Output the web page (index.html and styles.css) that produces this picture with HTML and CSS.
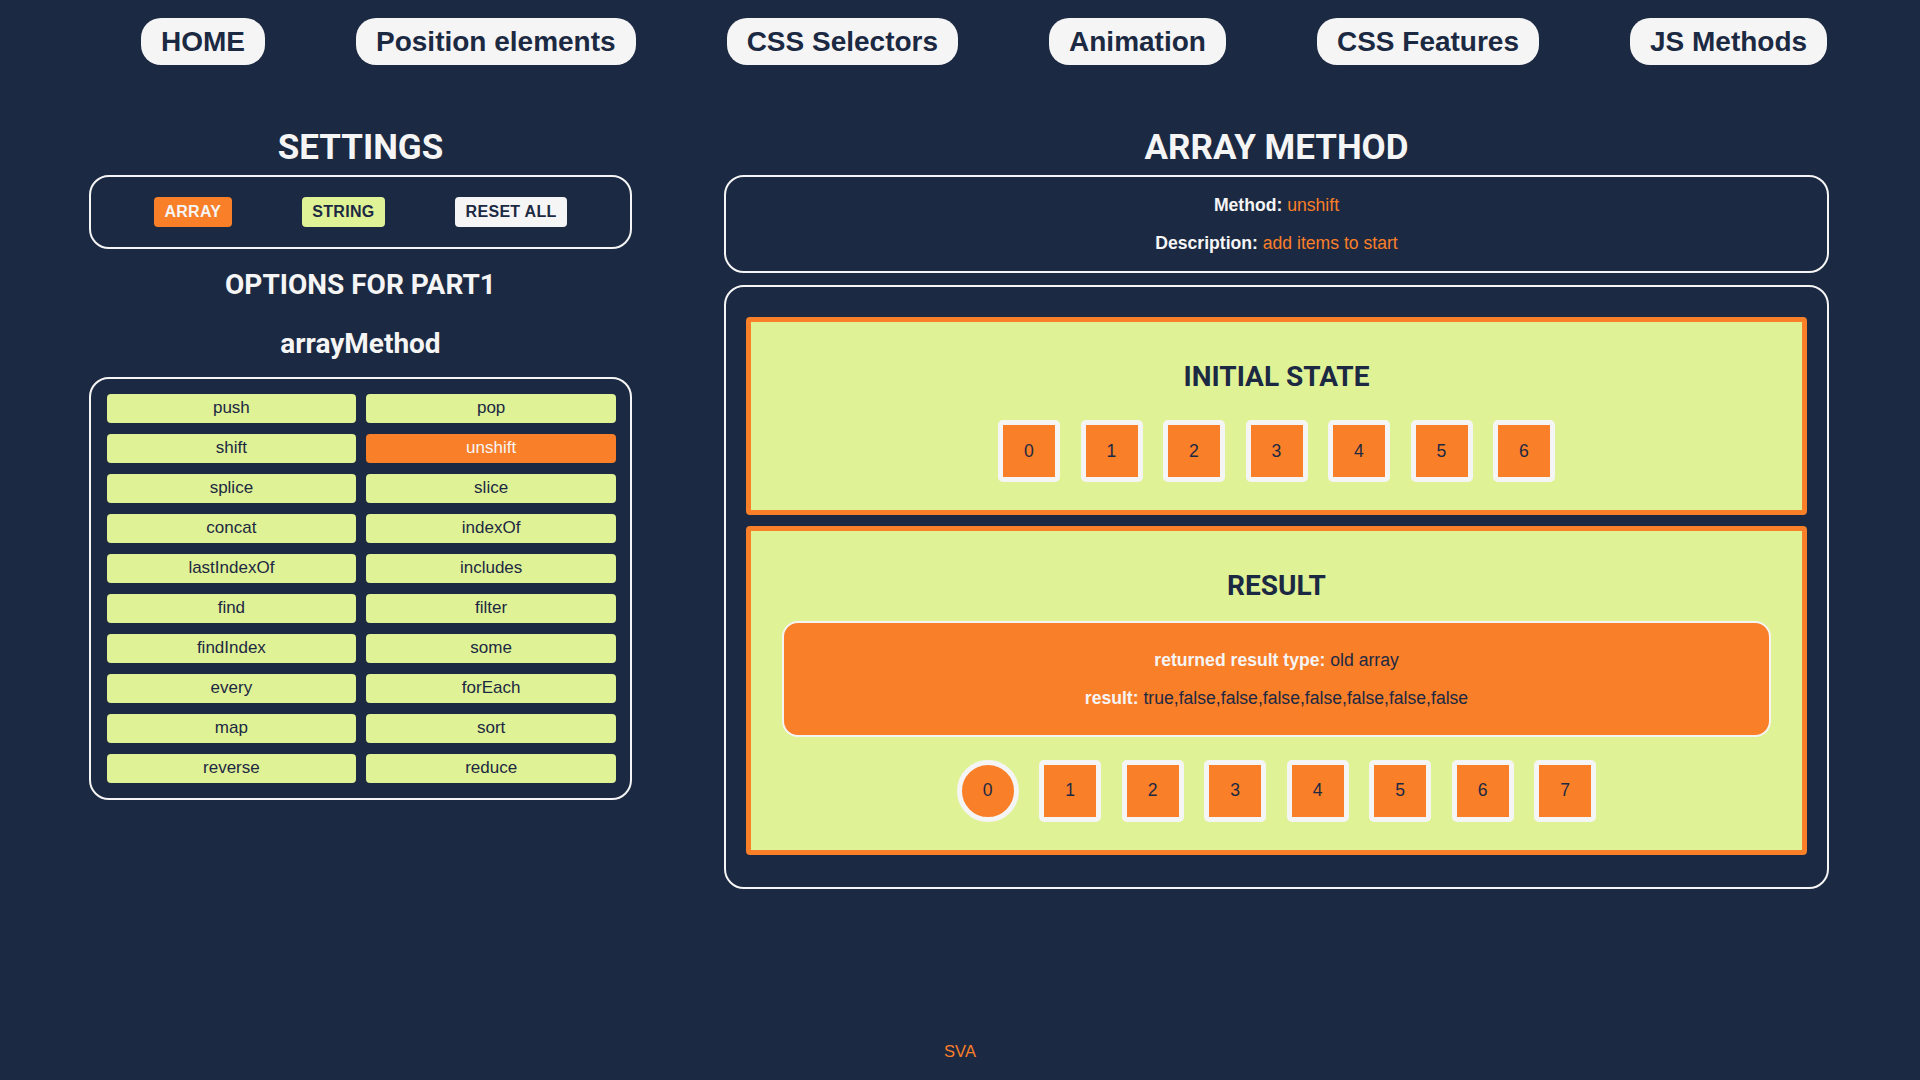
FILE: index.html
```html
<!DOCTYPE html>
<html lang="en">
<head>
<meta charset="utf-8">
<title>JS Methods - Array</title>
<link rel="stylesheet" href="styles.css">
</head>
<body>
<nav class="nav">
  <a class="nav-btn" href="#">HOME</a>
  <a class="nav-btn" href="#">Position elements</a>
  <a class="nav-btn" href="#">CSS Selectors</a>
  <a class="nav-btn" href="#">Animation</a>
  <a class="nav-btn" href="#">CSS Features</a>
  <a class="nav-btn" href="#">JS Methods</a>
</nav>
<main class="main">
  <section class="left">
    <h2 class="heading">SETTINGS</h2>
    <div class="card settings">
      <button class="set-btn set-array">ARRAY</button>
      <button class="set-btn set-string">STRING</button>
      <button class="set-btn set-reset">RESET ALL</button>
    </div>
    <h3 class="subheading sub-options">OPTIONS FOR PART1</h3>
    <h3 class="subheading sub-method">arrayMethod</h3>
    <div class="card options">
      <button class="opt">push</button>
      <button class="opt">pop</button>
      <button class="opt">shift</button>
      <button class="opt active">unshift</button>
      <button class="opt">splice</button>
      <button class="opt">slice</button>
      <button class="opt">concat</button>
      <button class="opt">indexOf</button>
      <button class="opt">lastIndexOf</button>
      <button class="opt">includes</button>
      <button class="opt">find</button>
      <button class="opt">filter</button>
      <button class="opt">findIndex</button>
      <button class="opt">some</button>
      <button class="opt">every</button>
      <button class="opt">forEach</button>
      <button class="opt">map</button>
      <button class="opt">sort</button>
      <button class="opt">reverse</button>
      <button class="opt">reduce</button>
    </div>
  </section>
  <section class="right">
    <h2 class="heading">ARRAY METHOD</h2>
    <div class="card info">
      <p class="line"><b class="label">Method:</b> <span class="accent">unshift</span></p>
      <p class="line"><b class="label">Description:</b> <span class="accent">add items to start</span></p>
    </div>
    <div class="card stage">
      <div class="box box-initial">
        <h3 class="box-title">INITIAL STATE</h3>
        <div class="items">
          <div class="item">0</div>
          <div class="item">1</div>
          <div class="item">2</div>
          <div class="item">3</div>
          <div class="item">4</div>
          <div class="item">5</div>
          <div class="item">6</div>
        </div>
      </div>
      <div class="box box-result">
        <h3 class="box-title">RESULT</h3>
        <div class="result-info">
          <p class="line"><b class="label">returned result type:</b> old array</p>
          <p class="line"><b class="label">result:</b> true,false,false,false,false,false,false,false</p>
        </div>
        <div class="items">
          <div class="item round">0</div>
          <div class="item">1</div>
          <div class="item">2</div>
          <div class="item">3</div>
          <div class="item">4</div>
          <div class="item">5</div>
          <div class="item">6</div>
          <div class="item">7</div>
        </div>
      </div>
    </div>
  </section>
</main>
<footer class="footer">SVA</footer>
</body>
</html>
```

FILE: styles.css
```css
* { box-sizing: border-box; }

html, body {
  margin: 0;
  padding: 0;
}

body {
  background: #1c2942;
  color: #f5f5f5;
  font-family: "Liberation Sans", Arial, sans-serif;
  width: 1920px;
  height: 1080px;
  overflow: hidden;
}

.nav {
  display: flex;
  gap: 91px;
  padding: 18px 0 0 141px;
}

.nav-btn {
  display: block;
  background: #f5f5f5;
  color: #1c2942;
  text-decoration: none;
  font-weight: 700;
  font-size: 28px;
  line-height: 32px;
  padding: 7.5px 20px;
  border-radius: 20px;
}

.main {
  display: flex;
  gap: 92px;
  padding-left: 89px;
  margin-top: 62px;
  align-items: flex-start;
}

.left {
  width: 543px;
  display: flex;
  flex-direction: column;
}

.right {
  width: 1105px;
  display: flex;
  flex-direction: column;
}

.heading {
  margin: 0 0 7px;
  font-family: Roboto, "Liberation Sans", sans-serif;
  font-weight: 700;
  font-size: 35px;
  line-height: 41px;
  text-align: center;
  color: #f5f5f5;
}

.card {
  border: 2px solid #f5f5f5;
  border-radius: 20px;
}

.settings {
  display: flex;
  justify-content: center;
  gap: 70px;
  padding: 20px 0;
  height: 74px;
}

.set-btn {
  border: none;
  font-family: "Liberation Sans", Arial, sans-serif;
  font-weight: 700;
  font-size: 16px;
  letter-spacing: 0.3px;
  height: 30px;
  padding: 0 10.5px;
  border-radius: 4px;
  color: #1c2942;
}

.set-array { background: #f97f29; color: #f5f5f5; }
.set-string { background: #e0f296; }
.set-reset { background: #f5f5f5; }

.subheading {
  margin: 0;
  font-family: Roboto, "Liberation Sans", sans-serif;
  font-weight: 700;
  font-size: 28px;
  line-height: 33px;
  text-align: center;
  color: #f5f5f5;
}

.sub-options { margin-top: 18.5px; }
.sub-method { margin-top: 26px; }

.options {
  margin-top: 17.5px;
  display: grid;
  grid-template-columns: 1fr 1fr;
  column-gap: 10px;
  row-gap: 10.5px;
  padding: 14.5px 14px 15px 15.5px;
}

.opt {
  border: none;
  background: #e0f296;
  color: #1c2942;
  font-family: "Liberation Sans", Arial, sans-serif;
  font-size: 17px;
  height: 29.5px;
  border-radius: 4px;
  padding: 0;
}

.opt.active {
  background: #f97f29;
  color: #f5f5f5;
}

.info {
  text-align: center;
}

.line {
  margin: 18px 0;
  font-size: 17.6px;
  line-height: 20px;
}

.label {
  font-weight: 700;
  color: #f5f5f5;
}

.accent {
  color: #f97f29;
}

.stage {
  margin-top: 12px;
  padding: 30px 20px 32px;
  display: flex;
  flex-direction: column;
  gap: 11px;
}

.box {
  background: #e0f296;
  border: 5px solid #f97f29;
  border-radius: 4px;
  display: flex;
  flex-direction: column;
  align-items: center;
}

.box-title {
  margin: 37.5px 0 27.5px;
  font-family: Roboto, "Liberation Sans", sans-serif;
  font-weight: 700;
  font-size: 28px;
  line-height: 33px;
  color: #1c2942;
}

.box-result .box-title {
  margin-bottom: 19px;
}

.items {
  display: flex;
  gap: 20.5px;
  margin-bottom: 28px;
}

.box-result .items {
  margin-bottom: 28px;
}

.item {
  width: 62px;
  height: 62px;
  border: 5px solid #f5f5f5;
  border-radius: 5px;
  background: #f97f29;
  color: #1c2942;
  font-size: 17.6px;
  display: flex;
  align-items: center;
  justify-content: center;
}

.item.round {
  border-radius: 50%;
}

.result-info {
  align-self: stretch;
  margin: 0 31px 23px;
  background: #f97f29;
  border: 2px solid #f5f5f5;
  border-radius: 16px;
  padding: 9px 0;
  text-align: center;
  color: #1c2942;
}

.result-info .line {
  margin: 18px 0;
}

.footer {
  margin-top: 152px;
  text-align: center;
  color: #f97f29;
  font-size: 16.5px;
  line-height: 20px;
}
```
